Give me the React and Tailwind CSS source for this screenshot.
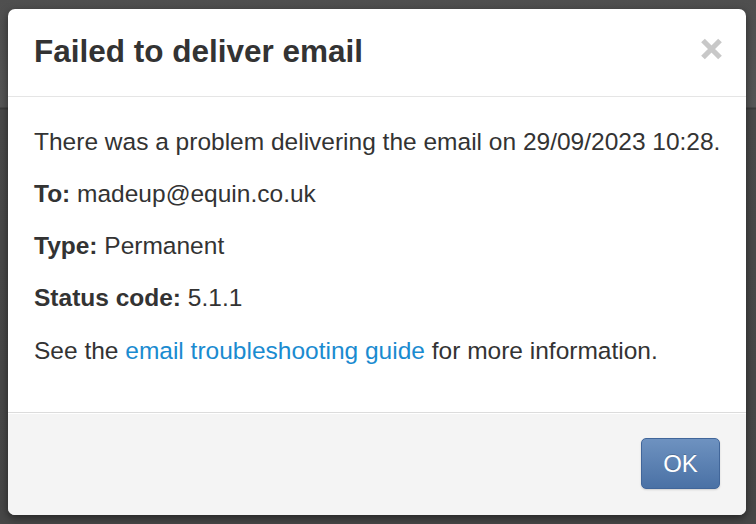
export default function App() {
  return (
    <div
      className="w-[756px] h-[524px] overflow-hidden pt-[9px] px-[8px] bg-[linear-gradient(#4f4f4f_0px,#565656_107px,#3c3c3c_108px,#3c3c3c_109px,#4a4a4a_110px,#474747_524px)]"
      style={{ fontFamily: '"Liberation Sans", Arial, sans-serif' }}
    >
      <div className="w-[738px] h-[506px] flex flex-col rounded-[7px] bg-white overflow-hidden shadow-[0_3px_9px_rgba(0,0,0,0.5)] text-[#333333]">
        {/* Header */}
        <div className="h-[88px] flex items-center justify-between pl-[26px] pr-[23px] border-b border-[#e5e5e5]">
          <h1 className="text-[31.5px] font-bold leading-none pb-[2px]">Failed to deliver email</h1>
          <svg width="23" height="22" viewBox="0 0 23 22" className="mt-[-8px]">
            <path d="M3 2.5 L20 19.5 M20 2.5 L3 19.5" stroke="#c8c8c8" strokeWidth="5.2" />
          </svg>
        </div>

        {/* Body */}
        <div className="flex-1 pl-[26px] pr-[20px] pt-[28px] text-[24.5px]">
          <p className="leading-[34px] mb-[18px] whitespace-nowrap">There was a problem delivering the email on 29/09/2023 10:28.</p>
          <p className="leading-[34px] mb-[18px]">
            <b>To:</b> madeup@equin.co.uk
          </p>
          <p className="leading-[34px] mb-[18px]">
            <b>Type:</b> Permanent
          </p>
          <p className="leading-[34px] mb-[19px]">
            <b>Status code:</b> 5.1.1
          </p>
          <p className="leading-[34px]">
            See the <a className="text-[#1a8bd0]">email troubleshooting guide</a> for more information.
          </p>
        </div>

        {/* Footer */}
        <div className="h-[103px] flex items-start justify-end pt-[25px] pr-[26px] bg-[#f4f4f4] border-t border-[#dcdcdc] shadow-[inset_0_1px_0_#ffffff]">
          <button className="w-[79px] h-[51px] rounded-[5px] border border-[#41669a] bg-[linear-gradient(#6e92c0,#4a71a5)] text-white text-[24px] leading-none [text-shadow:0_-1px_0_rgba(0,0,0,0.2)] shadow-[0_1px_2px_rgba(0,0,0,0.15)]">
            OK
          </button>
        </div>
      </div>
    </div>
  );
}
